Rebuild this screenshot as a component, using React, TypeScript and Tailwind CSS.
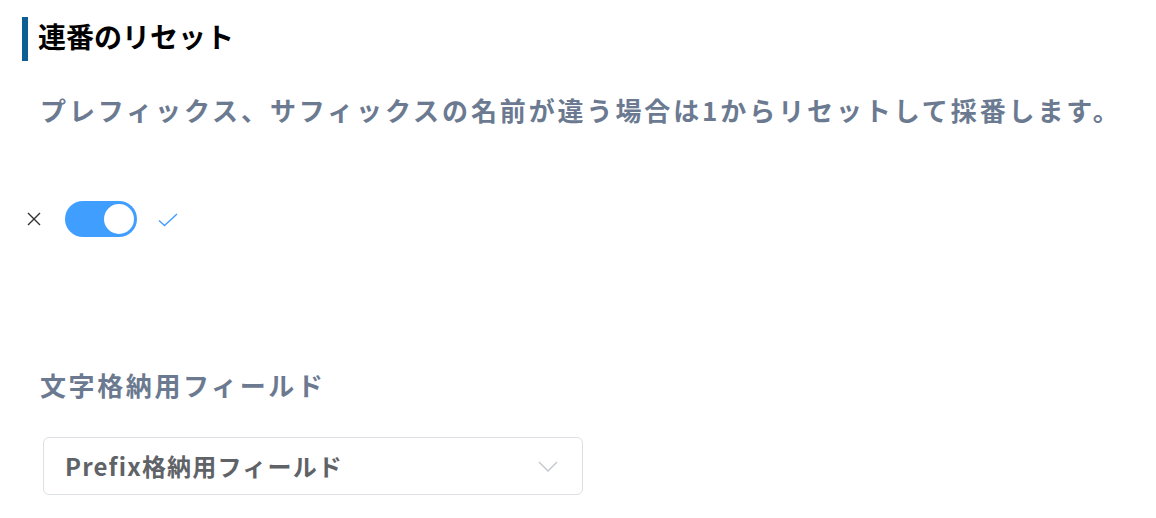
import { useState } from "react";

const font = { fontFamily: '"Noto Sans CJK JP", "Noto Sans", sans-serif' };

function CrossIcon() {
    return (
        <svg width="16" height="16" viewBox="0 0 16 16" fill="none" stroke="#303133" strokeWidth="1.4">
            <path d="M2 2 L14 14 M14 2 L2 14" />
        </svg>
    );
}

function CheckIcon() {
    return (
        <svg width="20" height="14" viewBox="0 0 20 14" fill="none" stroke="#409eff" strokeWidth="1.4">
            <path d="M1 7.5 L6.5 12.5 L19 1" />
        </svg>
    );
}

export default function App() {
    const [on, setOn] = useState(true);

    return (
        <div className="w-[1156px] h-[518px] bg-white overflow-hidden" style={font}>
            <div className="pl-[22px] pt-[17px]">
                <div className="flex items-center h-[44px] border-l-[6px] border-[#0b5f95] pl-[10px]">
                    <h2 className="text-[28px] font-bold text-black leading-none -mt-[6px]">連番のリセット</h2>
                </div>
            </div>

            <p className="mt-[32px] pl-[40px] text-[26px] font-bold text-[#6b7a90] leading-[34px] tracking-[2.9px]">
                プレフィックス、サフィックスの名前が違う場合は1からリセットして採番します。
            </p>

            <div className="mt-[74px] pl-[26px] flex items-center h-[36px]">
                <CrossIcon />
                <button
                    onClick={() => setOn(!on)}
                    className={[
                        "ml-[23px] w-[72px] h-[36px] rounded-full flex items-center px-[3px]",
                        on ? "bg-[#409eff] justify-end" : "bg-[#dcdfe6] justify-start",
                    ].join(" ")}
                >
                    <span className="w-[30px] h-[30px] rounded-full bg-white block" />
                </button>
                <span className="ml-[21px] mt-[2px]">
                    <CheckIcon />
                </span>
            </div>

            <div className="mt-[131px] pl-[40px] text-[26px] font-bold text-[#6b7a90] leading-[34px] tracking-[2.6px]">
                文字格納用フィールド
            </div>

            <div className="mt-[35px] ml-[43px] w-[540px] h-[58px] border border-[#dcdfe6] rounded-[6px] flex items-center justify-between pl-[21px] pr-[24px]">
                <span className="text-[24px] font-bold text-[#5f6368] tracking-[1.2px]">Prefix格納用フィールド</span>
                <svg width="20" height="11" viewBox="0 0 20 11" fill="none" stroke="#c0c4cc" strokeWidth="1.3">
                    <path d="M1 1 L10 10 L19 1" />
                </svg>
            </div>
        </div>
    );
}
